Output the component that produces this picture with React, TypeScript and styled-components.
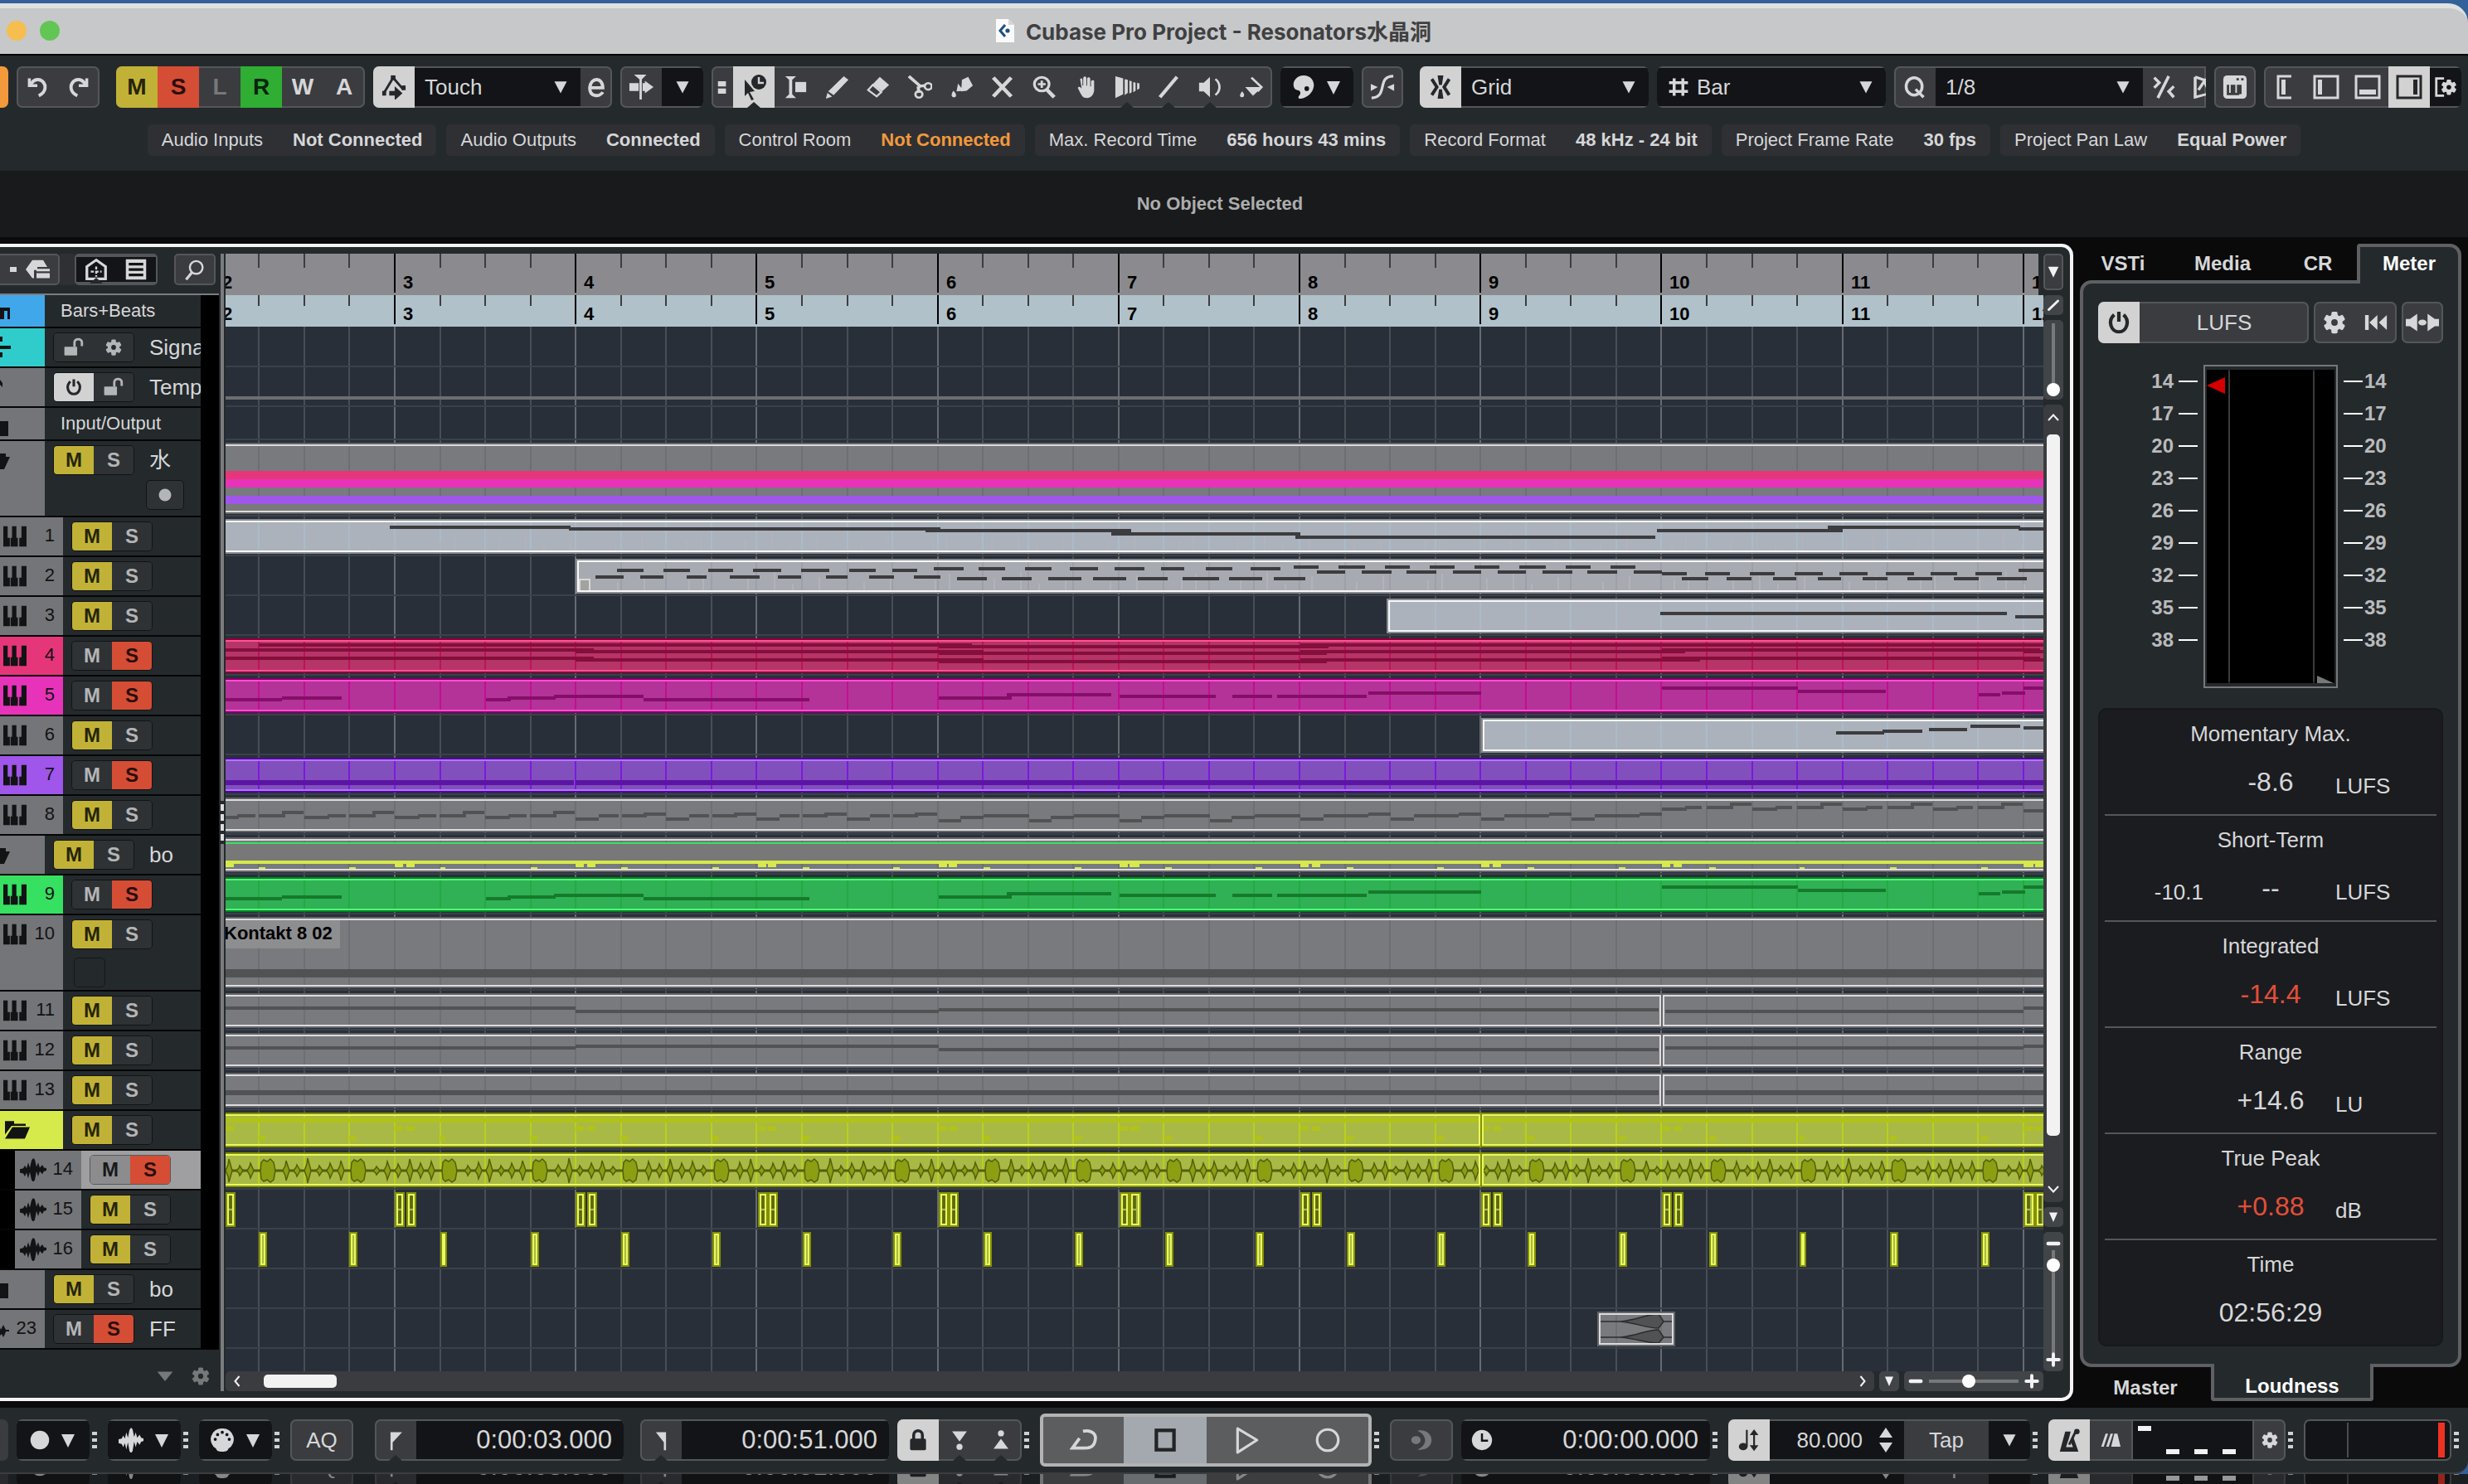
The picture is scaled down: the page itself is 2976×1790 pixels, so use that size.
import React from "react";
import styled, { createGlobalStyle, css } from "styled-components";

/* ------------------------------------------------------------------ */
/* Theme values                                                        */
/* ------------------------------------------------------------------ */

const c = {
  chrome: "#24292c",
  well: "#131417",
  btn: "#3b3c40",
  edge: "#55565a",
  lit: "#d2d2d3",
  ink: "#d6d7d8",
  mute: "#c1b237",
  solo: "#d54d35",
  read: "#30ad33",
  strip: "#747578",
};

const Global = createGlobalStyle`
  * { box-sizing: border-box; }
  body {
    margin: 0;
    background: #0a0a0b;
    color: ${c.ink};
    font-family: "Liberation Sans", Arial, "Noto Sans CJK SC", sans-serif;
    font-size: 26px;
    line-height: 1;
  }
  button, input, select {
    font: inherit;
    color: inherit;
    margin: 0;
    padding: 0;
    border: 0;
    border-radius: 0;
    background: none;
  }
`;

/* ------------------------------------------------------------------ */
/* Icons                                                               */
/* ------------------------------------------------------------------ */

const Svg = styled.svg<{ $w?: number; $h?: number }>`
  display: block;
  flex: none;
  width: ${(p) => p.$w ?? 32}px;
  height: ${(p) => p.$h ?? p.$w ?? 32}px;
  fill: currentColor;
`;

const S = {
  fill: "none",
  stroke: "currentColor",
  strokeWidth: 3,
} as const;

const GearShape = ({ hole }: { hole: string }) => (
  <g>
    {[0, 60, 120].map((a) => (
      <rect key={a} x="12" y="2" width="8" height="28" rx="2" transform={`rotate(${a} 16 16)`} />
    ))}
    <circle cx="16" cy="16" r="10.5" />
    <circle cx="16" cy="16" r="4.2" fill={hole} />
  </g>
);

const icons: Record<string, React.ReactNode> = {
  undo: (
    <g>
      <path d="M3 4h4v8h9v4H3z" />
      <path d="M7 13C10 5 18 4 23 8c6 6 5 15-5 20" {...S} strokeWidth={4.5} />
    </g>
  ),
  redo: (
    <g transform="matrix(-1 0 0 1 32 0)">
      <path d="M3 4h4v8h9v4H3z" />
      <path d="M7 13C10 5 18 4 23 8c6 6 5 15-5 20" {...S} strokeWidth={4.5} />
    </g>
  ),
  automation: (
    <g>
      <path d="M3 24L15 4l13 15" {...S} />
      <rect x="12" y="1" width="6" height="6" />
      <rect x="1" y="21" width="5" height="6" />
      <rect x="26" y="14" width="5" height="6" />
      <path d="M10 21h7v-6l10 9-10 9v-6h-7z" />
    </g>
  ),
  edit: <path d="M8 17h17c0-15-17-15-18 0 0 13 14 13 18 6" {...S} strokeWidth={4.5} />,
  autoscroll: (
    <g>
      <path d="M1 11h12v10H1zM21 8l11 8-11 8zM18 11h4v10h-4z" />
      <path d="M7 0h16l-6 6v26h-3V6z" />
    </g>
  ),
  dots2: <path d="M10 8h11v7H10zM10 18h11v7H10z" />,
  select: (
    <g>
      <path d="M5 7l12 14-6 1 5 9-3 1-4-9-4 4z" />
      <circle cx="22" cy="10" r="9" />
      <path d="M22 4v7h6" fill="none" stroke="#d2d2d3" strokeWidth="2.4" />
    </g>
  ),
  range: (
    <g>
      <path d="M3 1h14l-5 5v20l5 5H3l5-5V6z" />
      <rect x="16" y="9" width="14" height="14" />
    </g>
  ),
  pencil: <path d="M25 1l6 5L12 27l-7-5zM4 24l6 5-8 3z" />,
  eraser: (
    <g>
      <path d="M18 2l12 11-9 9L9 12z" />
      <path d="M9 13l11 10-6 6-11-9z" {...S} strokeWidth={2.5} />
    </g>
  ),
  scissors: (
    <g>
      <path d="M2 1l16 15M14 15l1 9M14 15l9-1" {...S} strokeWidth={4} />
      <circle cx="15" cy="26" r="4.5" {...S} />
      <circle cx="27" cy="15" r="4.5" {...S} />
    </g>
  ),
  glue: <path d="M17 6l8-4 6 12-8 7-7 1zM12 11l7 10-9 1zM6 21c5 5 4 9 1 9s-5-3-1-9z" />,
  mutex: <path d="M4 3l23 26M27 3L4 29" {...S} strokeWidth={5} />,
  zoom: (
    <g>
      <circle cx="13" cy="12" r="9.5" {...S} strokeWidth={3.5} />
      <path d="M19 19l10 11" {...S} strokeWidth={5} />
      <path d="M13 7v10M8 12h10" {...S} />
    </g>
  ),
  hand: (
    <path d="M9 5c1-2 3-1 3 1v8h1V3c1-2 3-2 4 0v11h1V4c1-2 3-2 4 0v11h1V8c1-2 4-2 4 0v13c-1 6-4 10-9 10-6 0-7-3-12-14 1-2 3-2 5 1z" />
  ),
  comp: <path d="M1 1l10 3v22L1 31zM13 5l4 1v18l-4 3zM19 7l3 1v15l-3 2zM24 9l3 1v11l-3 2zM29 10l3 1v7l-3 2z" />,
  line: <path d="M27 2L5 30" {...S} strokeWidth={4.5} />,
  speaker: (
    <g>
      <path d="M2 10h6l8-8v28l-8-8H2z" />
      <path d="M23 5c7 6 7 16 0 22" {...S} />
    </g>
  ),
  paint: (
    <g>
      <path d="M8 16h22L18 28zM4 22c4 4 3 8 0 8s-4-3 0-8z" />
      <path d="M16 3l13 13-5 6" {...S} />
    </g>
  ),
  palette: (
    <path
      fillRule="evenodd"
      d="M16 1c9 0 14 7 13 14-1 8-8 15-17 16-4 0-3-3-1-5 2-3 0-6-3-6C-1 18 2 1 16 1zM17 18a3 3 0 106 0 3 3 0 00-6 0z"
    />
  ),
  curve: (
    <g>
      <path d="M30 2c-22 0-6 27-28 28" {...S} strokeWidth={3.5} />
      <path d="M1 12l9 4-9 5zM31 12l-9 4 9 5z" />
    </g>
  ),
  snap: (
    <g>
      <path d="M4 5l7 11-7 11M28 5l-7 11 7 11" {...S} strokeWidth={4.5} />
      <path d="M12 0h8l-2 13h-4zM12 32h8l-2-13h-4z" />
    </g>
  ),
  hash: <path d="M10 4v24M22 4v24M3 10h26M3 22h26" {...S} strokeWidth={4} />,
  quant: (
    <g>
      <ellipse cx="15" cy="15" rx="11" ry="12" {...S} strokeWidth={4} />
      <path d="M17 19l11 11" {...S} strokeWidth={4} />
    </g>
  ),
  iterq: <path d="M23 1L8 31M3 3l7 7-7 7M30 15l-7 7 7 8" {...S} strokeWidth={4} />,
  qpanel: <path d="M4 2l10 4h16M4 2v28l26-8M8 20l7-12 5 12 8-8" {...S} strokeWidth={3.5} />,
  keyboardBox: (
    <g>
      <rect x="1" y="1" width="30" height="30" rx="5" />
      <path d="M7 13v12h5V13m3 0v12h5V13m3 0v12" fill="none" stroke={c.btn} strokeWidth="3" />
      <path d="M18 6h3M24 6h3" stroke={c.btn} strokeWidth="3" />
    </g>
  ),
  zoneInsp: (
    <g>
      <path d="M24 3H8v26h16" {...S} />
      <rect x="12" y="7" width="5" height="18" />
    </g>
  ),
  zoneLeft: (
    <g>
      <rect x="2" y="3" width="28" height="26" {...S} />
      <rect x="6" y="7" width="5" height="18" />
    </g>
  ),
  zoneLow: (
    <g>
      <rect x="2" y="3" width="28" height="26" {...S} />
      <rect x="6" y="19" width="20" height="6" />
    </g>
  ),
  zoneRight: (
    <g>
      <rect x="2" y="3" width="28" height="26" {...S} />
      <rect x="21" y="7" width="5" height="18" />
    </g>
  ),
  zoneGear: (
    <g>
      <path d="M14 5H4v22h10" {...S} />
      <g transform="translate(9 5) scale(.7)">
        <GearShape hole={c.well} />
      </g>
    </g>
  ),
  gear: <GearShape hole={c.btn} />,
  gearDark: <GearShape hole={c.chrome} />,
  down: <path d="M6 5h20L16 28z" />,
  record: <circle cx="16" cy="16" r="15" />,
  wave: (
    <path d="M0 15l4-1 2-4 2 4 2-8 2 7 2-10 2-3 2 2 2 10 2-6 2 7 3-4 2 4 4 1v3l-4 1-2 4-3-4-2 7-2-7-2 12-2 3-2-3-2-11-2 9-2-8-2 5-2-4-4-1z" />
  ),
  midi: (
    <g>
      <path d="M16 1a14 14 0 018 26c-1 3-3 4-8 4s-7-1-8-4A14 14 0 0116 1z" />
      <g fill={c.well}>
        <circle cx="7" cy="15" r="2" />
        <circle cx="10" cy="9" r="2" />
        <circle cx="16" cy="6" r="2" />
        <circle cx="22" cy="9" r="2" />
        <circle cx="25" cy="15" r="2" />
      </g>
    </g>
  ),
  locL: <path d="M9 5h16L12 19v11H9z" />,
  locR: <path d="M23 5H9l11 14v11h3z" />,
  lock: (
    <g>
      <rect x="5" y="14" width="22" height="16" rx="2" />
      <path d="M10 15V9c0-8 12-8 12 0v6" {...S} strokeWidth={4} />
    </g>
  ),
  punchIn: (
    <g>
      <path d="M5 3h22L16 18z" />
      <circle cx="16" cy="26" r="4.5" />
    </g>
  ),
  punchOut: (
    <g>
      <path d="M5 29h22L16 14z" />
      <circle cx="16" cy="6" r="4.5" />
    </g>
  ),
  cycle: <path d="M15 6c8-2 15 2 14 9-1 8-5 10-12 10H3l8-11" {...S} strokeWidth={3.5} />,
  stop: <rect x="6" y="5" width="20" height="22" {...S} strokeWidth={4} />,
  play: <path d="M5 3v27L27 16z" {...S} strokeLinejoin="round" />,
  rec: <circle cx="16" cy="16" r="12" {...S} />,
  moon: (
    <g>
      <path d="M11 2c24-4 24 32 0 28 13-6 13-21 0-28z" />
      <circle cx="9" cy="16" r="6" />
    </g>
  ),
  clock: (
    <g>
      <circle cx="16" cy="16" r="15" />
      <path d="M16 6v11h9" fill="none" stroke={c.well} strokeWidth="3" />
    </g>
  ),
  note: (
    <g>
      <ellipse cx="8" cy="25" rx="6" ry="5" />
      <path d="M13 2v23M23 6v20" {...S} strokeWidth={2.5} />
      <path d="M17 9l6-8 6 8zM17 23l6 8 6-8z" />
    </g>
  ),
  metronome: (
    <g>
      <path fillRule="evenodd" d="M11 5h7l-2 8-4 12h9l-3-7 3-7 7 20H4z" />
      <path d="M16 22L25 4" {...S} />
      <circle cx="26" cy="5" r="3.5" />
    </g>
  ),
  click: <path d="M1 30L8 2h4L5 30zM9 30L16 2h4l-7 28zM17 30L22 2h5l5 28z" />,
  power: (
    <g>
      <path d="M10 6c-9 8-4 22 6 22S31 14 22 6" {...S} strokeWidth={4.5} />
      <path d="M16 2v13" {...S} strokeWidth={4.5} />
    </g>
  ),
  rewind: <path d="M1 4h5v24H1zM18 4v24L7 16zM31 4v24L20 16z" />,
  monitor: (
    <g>
      <path d="M0 11h4l7-7v24l-7-7H0zM32 11h-4l-7-7v24l7-7h4z" />
      <circle cx="16" cy="16" r="4" />
    </g>
  ),
  unlock: (
    <g>
      <rect x="2" y="15" width="19" height="14" rx="1" />
      <path d="M17 15V8c0-7 11-7 11 0v6" {...S} strokeWidth={3.5} />
    </g>
  ),
  presets: <path d="M9 1h13l5 11H15v5h-4v13H9L1 16zM14 15h16v4H14zM14 22h16v8H14z" />,
  house: (
    <g>
      <path d="M16 3L4 12v17h24V12z" {...S} strokeWidth={3.5} />
      <path d="M16 12v14M9 19h14" {...S} strokeWidth={2.5} strokeDasharray="4 2" />
    </g>
  ),
  list: (
    <path fillRule="evenodd" d="M2 1h28v30H2zM6 6v4h20V6zM6 14v4h20v-4zM6 22v4h20v-4z" />
  ),
  search: (
    <g>
      <circle cx="18" cy="13" r="9.5" {...S} />
      <path d="M12 20L3 31" {...S} strokeWidth={4} />
    </g>
  ),
  piano: <path d="M0 2h6v16h3v12H0zM12 2h6v16h2v12H10V18h2zM25 2h7v28H22V18h3z" />,
  folder: <path d="M1 4h12v4h14v3H10L2 24V4zM11 13h21l-6 17H2z" />,
  pencilSmall: <path d="M5 27L27 6" {...S} strokeWidth={6} strokeLinecap="round" />,
  minus: <path d="M5 16h22" {...S} strokeWidth={8} strokeLinecap="round" />,
  plus: <path d="M4 16h24M16 4v24" {...S} strokeWidth={7} strokeLinecap="round" />,
  chevL: <path d="M21 4L11 16l10 12" {...S} strokeWidth={4} />,
  chevR: <path d="M11 4l10 12-10 12" {...S} strokeWidth={4} />,
  chevU: <path d="M4 22L16 9l12 13" {...S} strokeWidth={4} />,
  chevD: <path d="M4 10l12 13 12-13" {...S} strokeWidth={4} />,
};

const Icon = ({ name, size = 28, h }: { name: string; size?: number; h?: number }) => (
  <Svg viewBox="0 0 32 32" $w={size} $h={h} preserveAspectRatio="none" aria-hidden="true">
    {icons[name]}
  </Svg>
);

/* ------------------------------------------------------------------ */
/* Window frame and toolbar                                            */
/* ------------------------------------------------------------------ */

const Page = styled.div`
  display: flex;
  flex-direction: column;
  min-height: 100vh;
  overflow: hidden;
  background: #33619a;
  padding-top: 4px;
`;

const TitleBar = styled.header`
  display: flex;
  align-items: center;
  gap: 16px;
  height: 63px;
  padding: 0 8px 2px;
  background: #c7c8ca;
  border-top: 6px solid #e0e1e1;
  border-bottom: 2px solid #050505;
  border-radius: 0 24px 0 0;
`;

const Light = styled.button<{ $bg: string }>`
  width: 24px;
  height: 24px;
  border-radius: 50%;
  background: ${(p) => p.$bg};
`;

const Title = styled.h1`
  flex: 1;
  display: flex;
  justify-content: center;
  align-items: center;
  gap: 13px;
  margin: 0;
  padding-right: 130px;
  font: 700 26px Inter, "Noto Sans CJK SC", sans-serif;
  color: #3f4041;
`;

const ToolBar = styled.div`
  display: flex;
  align-items: center;
  gap: 10px;
  height: 76px;
  padding: 0 8px 0 0;
  background: ${c.chrome};
`;

const Group = styled.div<{ $w?: number; $ml?: number; $cut?: boolean }>`
  display: flex;
  flex: none;
  width: ${(p) => (p.$w ? `${p.$w}px` : "auto")};
  height: 50px;
  margin-left: ${(p) => p.$ml ?? 0}px;
  overflow: hidden;
  border-radius: 7px;
  background: ${c.btn};
  box-shadow: inset 0 0 0 2px ${c.edge};
  ${(p) => p.$cut && css`border-radius: 7px 0 0 7px;`}
`;

const tones = {
  plain: css`color: ${c.ink};`,
  lit: css`background: ${c.lit}; color: #262729;`,
  well: css`background: ${c.well}; color: ${c.ink}; box-shadow: inset 0 2px ${c.edge}, inset 0 -2px ${c.edge};`,
  mute: css`background: ${c.mute}; color: #262408;`,
  solo: css`background: ${c.solo}; color: #2a0e09;`,
  read: css`background: ${c.read}; color: #07250b;`,
  dim: css`color: #77787a;`,
};
type Tone = keyof typeof tones;

const Btn = styled.button<{ $w?: number; $tone?: Tone; $notch?: boolean }>`
  position: relative;
  display: flex;
  flex: none;
  align-items: center;
  justify-content: center;
  width: ${(p) => p.$w ?? 50}px;
  height: 100%;
  overflow: hidden;
  font-size: 28px;
  font-weight: bold;
  ${(p) => tones[p.$tone ?? "plain"]}
  ${(p) =>
    p.$notch &&
    css`
      &::after {
        content: "";
        position: absolute;
        bottom: 0;
        left: calc(50% - 8px);
        border: 8px solid transparent;
        border-top: 0;
        border-bottom: 7px solid ${c.chrome};
      }
    `}
`;

const SelectBox = styled.label<{ $w: number; $pad?: number }>`
  display: flex;
  flex: none;
  align-items: center;
  gap: 8px;
  width: ${(p) => p.$w}px;
  padding: 0 12px;
  background: ${c.well};
  box-shadow: inset 0 2px ${c.edge}, inset 0 -2px ${c.edge};
  select {
    flex: 1;
    min-width: 0;
    appearance: none;
    outline: none;
  }
`;

const Pick = ({ w, value, label, icon }: { w: number; value: string; label: string; icon?: string }) => (
  <SelectBox $w={w}>
    {icon && <Icon name={icon} size={28} />}
    <select aria-label={label} defaultValue={value}>
      <option>{value}</option>
    </select>
    <Icon name="down" size={24} h={20} />
  </SelectBox>
);

const Partial = styled.button<{ $bg: string }>`
  flex: none;
  width: 10px;
  height: 50px;
  border-radius: 0 7px 7px 0;
  background: ${(p) => p.$bg};
`;

const tools: [string, string, boolean][] = [
  ["range", "Range selection", false],
  ["pencil", "Draw", false],
  ["eraser", "Erase", false],
  ["scissors", "Split", false],
  ["glue", "Glue", false],
  ["mutex", "Mute", false],
  ["zoom", "Zoom", false],
  ["hand", "Hand", false],
  ["comp", "Comp", true],
  ["line", "Line", true],
  ["speaker", "Play", true],
  ["paint", "Colour", false],
];

const MainToolbar = () => (
  <ToolBar role="toolbar" aria-label="Project tools">
    <Partial $bg="#f2993c" aria-label="Activate project" />
    <Group $w={100}>
      <Btn aria-label="Undo"><Icon name="undo" size={28} /></Btn>
      <Btn aria-label="Redo"><Icon name="redo" size={28} /></Btn>
    </Group>
    <Group $w={300} $ml={10}>
      <Btn $tone="mute">M</Btn>
      <Btn $tone="solo">S</Btn>
      <Btn $tone="dim">L</Btn>
      <Btn $tone="read">R</Btn>
      <Btn>W</Btn>
      <Btn>A</Btn>
    </Group>
    <Group $w={288}>
      <Btn $tone="lit" aria-label="Automation panel"><Icon name="automation" size={30} /></Btn>
      <Pick w={200} value="Touch" label="Automation mode" />
      <Btn $w={38} aria-label="Edit"><Icon name="edit" size={28} /></Btn>
    </Group>
    <Group $w={100}>
      <Btn aria-label="Auto-scroll"><Icon name="autoscroll" size={30} /></Btn>
      <Btn $tone="well" aria-label="Auto-scroll settings"><Icon name="down" size={24} h={20} /></Btn>
    </Group>
    <Group $w={676}>
      <Btn $w={26} aria-label="Tool options"><Icon name="dots2" size={28} /></Btn>
      <Btn $tone="lit" $notch aria-label="Object selection"><Icon name="select" size={32} /></Btn>
      {tools.map(([icon, label, notch]) => (
        <Btn key={icon} $notch={notch} aria-label={label}><Icon name={icon} size={30} h={28} /></Btn>
      ))}
    </Group>
    <Group $w={88}>
      <Btn $w={88} $tone="well" aria-label="Colour menu">
        <Icon name="palette" size={30} />
        <Svg viewBox="0 0 32 20" $w={32} $h={20} aria-hidden="true"><path d="M13 3h16l-8 16z" /></Svg>
      </Btn>
    </Group>
    <Group $w={50}>
      <Btn aria-label="Zero crossings"><Icon name="curve" size={30} /></Btn>
    </Group>
    <Group $w={276} $ml={10}>
      <Btn $tone="lit" aria-label="Snap"><Icon name="snap" size={28} /></Btn>
      <Pick w={226} value="Grid" label="Snap type" />
    </Group>
    <Group $w={276}>
      <Pick w={276} value="Bar" label="Grid type" icon="hash" />
    </Group>
    <Group $w={376} $cut>
      <Btn aria-label="Quantize"><Icon name="quant" size={28} /></Btn>
      <Pick w={250} value="1/8" label="Quantize preset" />
      <Btn aria-label="Iterative quantize"><Icon name="iterq" size={28} /></Btn>
      <Btn aria-label="Quantize panel"><Icon name="qpanel" size={32} h={28} /></Btn>
    </Group>
    <Group $w={50}>
      <Btn aria-label="Input keyboard"><Icon name="keyboardBox" size={30} /></Btn>
    </Group>
    <Group $w={238}>
      <Btn aria-label="Inspector"><Icon name="zoneInsp" size={32} /></Btn>
      <Btn aria-label="Left zone"><Icon name="zoneLeft" size={32} /></Btn>
      <Btn aria-label="Lower zone"><Icon name="zoneLow" size={32} /></Btn>
      <Btn $tone="lit" aria-label="Right zone"><Icon name="zoneRight" size={32} /></Btn>
      <Btn $w={38} $tone="well" aria-label="Layout setup"><Icon name="zoneGear" size={30} /></Btn>
    </Group>
  </ToolBar>
);

const StatusBar = styled.dl`
  display: flex;
  justify-content: center;
  gap: 12px;
  margin: 0;
  padding: 7px 24px 18px 0;
  background: ${c.chrome};
  font-size: 22px;
`;

const Pill = styled.div<{ $warn?: boolean }>`
  display: flex;
  align-items: center;
  gap: 36px;
  height: 38px;
  padding: 0 17px;
  border-radius: 5px;
  background: #2f3034;
  white-space: nowrap;
  dd {
    margin: 0;
    font-weight: bold;
    color: ${(p) => (p.$warn ? "#f2993c" : "inherit")};
  }
`;

const status: [string, string, boolean?][] = [
  ["Audio Inputs", "Not Connected"],
  ["Audio Outputs", "Connected"],
  ["Control Room", "Not Connected", true],
  ["Max. Record Time", "656 hours 43 mins"],
  ["Record Format", "48 kHz - 24 bit"],
  ["Project Frame Rate", "30 fps"],
  ["Project Pan Law", "Equal Power"],
];

const InfoLine = styled.div`
  display: flex;
  align-items: center;
  justify-content: center;
  height: 80px;
  padding-right: 34px;
  background: #191a1b;
  font-size: 22px;
  font-weight: bold;
  color: #adadae;
`;

/* ------------------------------------------------------------------ */
/* Track list                                                          */
/* ------------------------------------------------------------------ */

const Main = styled.main`
  display: flex;
  padding: 8px 8px 8px 0;
  background: #0a0a0b;
`;

const Frame = styled.section`
  display: flex;
  flex: 1;
  min-width: 0;
  padding: 8px 8px 8px 0;
  border: 4px solid #f4f4f6;
  border-left: 0;
  border-radius: 0 14px 14px 0;
  background: ${c.chrome};
`;

const ListColumn = styled.div`
  display: flex;
  flex-direction: column;
  flex: none;
  width: 264px;
`;

const ListHead = styled.div`
  display: flex;
  height: 50px;
  border-bottom: 2px solid #7b7c80;
`;

const HeadGroup = styled.div<{ $w: number; $open?: boolean; $ml?: number }>`
  display: flex;
  align-items: center;
  justify-content: flex-end;
  width: ${(p) => p.$w}px;
  height: 38px;
  margin-left: ${(p) => p.$ml ?? 0}px;
  border: 2px solid ${c.edge};
  border-left-width: ${(p) => (p.$open ? 0 : 2)}px;
  border-radius: ${(p) => (p.$open ? "0 5px 5px 0" : "5px")};
  background: ${c.btn};
`;

const HeadFill = styled.div`
  width: 18px;
  height: 38px;
  background: #2f3034;
`;

const Rows = styled.ol`
  margin: 0;
  padding: 0;
  list-style: none;
  background: #000;
`;

const Row = styled.li<{ $h: number; $sel?: boolean; $nest?: boolean }>`
  display: flex;
  width: 242px;
  height: ${(p) => p.$h}px;
  padding-left: ${(p) => (p.$nest ? 18 : 0)}px;
  border-bottom: 2px solid #050505;
  overflow: hidden;
`;

const Strip = styled.div<{ $bg: string; $w: number; $nest?: boolean }>`
  display: flex;
  flex: none;
  align-items: flex-start;
  justify-content: space-between;
  width: ${(p) => p.$w}px;
  padding: 9px 10px 0 ${(p) => (p.$nest ? 6 : p.$w === 54 ? 0 : 4)}px;
  background: ${(p) => p.$bg};
  color: #121314;
  font-size: 22px;
  line-height: 26px;
`;

const Body = styled.div<{ $sel?: boolean }>`
  flex: 1;
  min-width: 0;
  padding: 5px 0 0 10px;
  background: ${(p) => (p.$sel ? "#9f9fa1" : c.chrome)};
`;

const Line = styled.div`
  display: flex;
  align-items: center;
  height: 36px;
  gap: 18px;
  white-space: nowrap;
`;

const Label = styled.div`
  padding-left: 9px;
  font-size: 22px;
  line-height: 28px;
  white-space: nowrap;
`;

const Pair = styled.div<{ $sel?: boolean }>`
  display: flex;
  flex: none;
  height: 36px;
  border: 1px solid ${(p) => (p.$sel ? "#58595a" : "#121314")};
  border-radius: 5px;
  overflow: hidden;
`;

const Cell = styled.button<{ $on?: "mute" | "solo" | "lit"; $sel?: boolean }>`
  display: flex;
  align-items: center;
  justify-content: center;
  width: 48px;
  height: 34px;
  font-size: 24px;
  font-weight: bold;
  background: ${(p) =>
    p.$on ? { mute: c.mute, solo: c.solo, lit: c.lit }[p.$on] : p.$sel ? "#8c8c8e" : "#2e3235"};
  color: ${(p) =>
    p.$on ? { mute: "#262408", solo: "#2a0e09", lit: "#262729" }[p.$on] : p.$sel ? "#18191a" : "#b4b5b6"};
`;

const ArmBox = styled.button<{ $empty?: boolean }>`
  display: flex;
  align-items: center;
  justify-content: center;
  width: ${(p) => (p.$empty ? 38 : 46)}px;
  height: 36px;
  margin: ${(p) => (p.$empty ? "10px 0 0 3px" : "6px 0 0 112px")};
  border: 1px solid ${(p) => (p.$empty ? "#15171a" : "#121314")};
  border-radius: 5px;
  background: ${(p) => (p.$empty ? "transparent" : "#2e3235")};
  color: #b4b5b6;
`;

type Kind = "piano" | "wave" | "folder" | "cut";
interface Track {
  n?: string;
  name?: string;
  bg?: string;
  kind: Kind;
  on: "mute" | "solo";
  level: 0 | 1 | 2;
  h?: number;
  sel?: boolean;
  extra?: "arm" | "slot";
}

const tracks: Track[] = [
  { name: "水", kind: "cut", on: "mute", level: 0, h: 92, extra: "arm" },
  { n: "1", kind: "piano", on: "mute", level: 1 },
  { n: "2", kind: "piano", on: "mute", level: 1 },
  { n: "3", kind: "piano", on: "mute", level: 1 },
  { n: "4", kind: "piano", on: "solo", level: 1, bg: "#e6367a" },
  { n: "5", kind: "piano", on: "solo", level: 1, bg: "#e733b9" },
  { n: "6", kind: "piano", on: "mute", level: 1 },
  { n: "7", kind: "piano", on: "solo", level: 1, bg: "#a055eb" },
  { n: "8", kind: "piano", on: "mute", level: 1 },
  { name: "bo", kind: "cut", on: "mute", level: 0 },
  { n: "9", kind: "piano", on: "solo", level: 1, bg: "#36e061" },
  { n: "10", kind: "piano", on: "mute", level: 1, h: 92, extra: "slot" },
  { n: "11", kind: "piano", on: "mute", level: 1 },
  { n: "12", kind: "piano", on: "mute", level: 1 },
  { n: "13", kind: "piano", on: "mute", level: 1 },
  { kind: "folder", on: "mute", level: 1, bg: "#d6ea4b" },
  { n: "14", kind: "wave", on: "solo", level: 2, sel: true },
  { n: "15", kind: "wave", on: "mute", level: 2 },
  { n: "16", kind: "wave", on: "mute", level: 2 },
  { name: "bo", kind: "cut", on: "mute", level: 0 },
  { n: "23", name: "FF", kind: "cut", on: "solo", level: 0 },
];

const CutFolder = () => (
  <Svg viewBox="0 0 12 28" $w={12} $h={28} aria-hidden="true">
    <path d="M0 6h7v4h5L5 25H0z" />
  </Svg>
);
const CutBlock = () => (
  <Svg viewBox="0 0 10 28" $w={10} $h={28} aria-hidden="true">
    <path d="M0 7h10v18H0z" />
  </Svg>
);
const CutWave = () => (
  <Svg viewBox="0 0 11 28" $w={11} $h={28} aria-hidden="true">
    <path d="M0 12l1 3 3-6 2 4 1 2h4v2H7l-1 3-2 4-2-4-2 2z" />
  </Svg>
);

const widths = [54, 76, 80];

const TrackRow = ({ t, index }: { t: Track; index: number }) => (
  <Row $h={t.h ?? 48} $nest={t.level === 2}>
    <Strip $bg={t.bg ?? c.strip} $w={widths[t.level]} $nest={t.level === 2}>
      {t.kind === "piano" && <Icon name="piano" size={28} />}
      {t.kind === "wave" && <Icon name="wave" size={32} h={28} />}
      {t.kind === "folder" && <Icon name="folder" size={32} h={26} />}
      {t.kind === "cut" && (t.n ? <CutWave /> : index === 19 ? <CutBlock /> : <CutFolder />)}
      <span>{t.n}</span>
    </Strip>
    <Body $sel={t.sel}>
      <Line>
        <Pair $sel={t.sel}>
          <Cell $on={t.on === "mute" ? "mute" : undefined} $sel={t.sel}>M</Cell>
          <Cell $on={t.on === "solo" ? "solo" : undefined} $sel={t.sel}>S</Cell>
        </Pair>
        {t.name && <span>{t.name}</span>}
      </Line>
      {t.extra === "arm" && (
        <ArmBox aria-label="Record enable"><Icon name="record" size={16} /></ArmBox>
      )}
      {t.extra === "slot" && <ArmBox $empty aria-label="Empty control slot" />}
    </Body>
  </Row>
);

const ListFoot = styled.div`
  display: flex;
  flex: 1;
  align-items: center;
  justify-content: flex-end;
  gap: 16px;
  height: 50px;
  padding: 14px 10px 0 0;
  color: #77787a;
`;

const TrackList = () => (
  <ListColumn>
    <ListHead>
      <HeadGroup $w={72} $open>
        <Svg viewBox="0 0 10 30" $w={10} $h={30} aria-hidden="true"><path d="M0 12h8v6H0z" /></Svg>
        <Btn $w={48} aria-label="Track presets"><Icon name="presets" size={32} h={24} /></Btn>
      </HeadGroup>
      <HeadFill />
      <HeadGroup $w={100}>
        <Btn $w={48} $tone="well" $notch aria-label="Track visibility"><Icon name="house" size={30} h={28} /></Btn>
        <Btn $w={48} $tone="well" aria-label="Track filter"><Icon name="list" size={28} h={26} /></Btn>
      </HeadGroup>
      <HeadGroup $w={50} $ml={20}>
        <Btn $w={46} aria-label="Find tracks"><Icon name="search" size={26} /></Btn>
      </HeadGroup>
    </ListHead>
    <Rows>
      <Row $h={40}>
        <Strip $bg="#40a8ea" $w={54}>
          <Svg viewBox="0 0 12 24" $w={12} $h={24} aria-hidden="true"><path d="M0 6h12v14H9V10H5v10H0z" /></Svg>
        </Strip>
        <Body><Label>Bars+Beats</Label></Body>
      </Row>
      <Row $h={48}>
        <Strip $bg="#30cccb" $w={54}>
          <Svg viewBox="0 0 13 28" $w={13} $h={28} aria-hidden="true"><path d="M0 12h13v4H0zM0 1h3v6H0zM0 20h3v6H0z" /></Svg>
        </Strip>
        <Body>
          <Line>
            <Pair>
              <Cell aria-label="Lock"><Icon name="unlock" size={26} h={24} /></Cell>
              <Cell aria-label="Settings"><Icon name="gearDark" size={22} /></Cell>
            </Pair>
            <span>Signature</span>
          </Line>
        </Body>
      </Row>
      <Row $h={48}>
        <Strip $bg={c.strip} $w={54}>
          <Svg viewBox="0 0 4 28" $w={4} $h={28} aria-hidden="true"><path d="M0 5l3 4v5l-3-3z" /></Svg>
        </Strip>
        <Body>
          <Line>
            <Pair>
              <Cell $on="lit" aria-label="Activate tempo"><Icon name="power" size={22} /></Cell>
              <Cell aria-label="Lock"><Icon name="unlock" size={26} h={24} /></Cell>
            </Pair>
            <span>Tempo</span>
          </Line>
        </Body>
      </Row>
      <Row $h={40}>
        <Strip $bg={c.strip} $w={54}><CutBlock /></Strip>
        <Body><Label>Input/Output</Label></Body>
      </Row>
      {tracks.map((t, i) => (
        <TrackRow key={i} t={t} index={i} />
      ))}
    </Rows>
    <ListFoot>
      <Icon name="down" size={30} h={16} />
      <Icon name="gearDark" size={24} />
    </ListFoot>
  </ListColumn>
);

const Divider = styled.div`
  display: flex;
  flex-direction: column;
  justify-content: center;
  flex: none;
  width: 4px;
  margin: 0 2px;
  background: #7b7c80;
`;

const Grip = styled.div`
  height: 52px;
  background: repeating-linear-gradient(${c.chrome} 0 4px, #dcdcde 4px 12px);
`;

/* ------------------------------------------------------------------ */
/* Arrangement                                                         */
/* ------------------------------------------------------------------ */

const BAR = 218.2;
const END = 2220;
const barX = (n: number) => Math.round(204 + BAR * (n - 3));
const bars = [2, 3, 4, 5, 6, 7, 8, 9, 10, 11, 12];
const beats = bars.flatMap((n) => [0, 1, 2, 3].map((b) => ({ x: Math.round(204 + BAR * (n - 3 + b / 4)), bar: b === 0 })));

const Timeline = styled.div`
  display: flex;
  flex-direction: column;
  flex: 1;
  min-width: 0;
`;

const RulerRow = styled.div<{ $h: number; $bg: string; $short?: boolean }>`
  position: relative;
  height: ${(p) => p.$h}px;
  margin-right: ${(p) => (p.$short ? 6 : 0)}px;
  overflow: hidden;
  background: ${(p) => p.$bg};
  font-size: 22px;
  font-weight: bold;
  color: #000;
  svg { fill: none; }
`;

const BarNo = styled.span`
  position: absolute;
  bottom: 4px;
`;

const Ruler = ({ h, bg, tick, short }: { h: number; bg: string; tick: number; short?: boolean }) => (
  <RulerRow $h={h} $bg={bg} $short={short}>
    <Svg viewBox={`0 0 ${END} ${h}`} $w={END} $h={h} aria-hidden="true">
      {beats.map((b) => (
        <path key={b.x} d={`M${b.x} 0v${b.bar ? h - 3 : tick}`} stroke={b.bar ? "#000" : "#3c3d40"} strokeWidth="2" />
      ))}
    </Svg>
    {bars.map((n) => (
      <BarNo key={n} style={{ left: barX(n) + 10 }}>{n}</BarNo>
    ))}
  </RulerRow>
);

const Arrange = styled.div`
  position: relative;
  display: flex;
  flex-direction: column;
  flex: 1;
  overflow: hidden;
  background: #282f39;
`;

const Grid = styled.svg`
  position: absolute;
  top: 0;
  left: 0;
  width: ${END}px;
  height: 100%;
`;

const Lane = styled.div<{ $h: number }>`
  position: relative;
  flex: none;
  height: ${(p) => p.$h}px;
  border-bottom: 2px solid #3a414a;
`;

const TempoCurve = styled.div`
  margin-top: 35px;
  height: 4px;
  background: #6d6e71;
`;

const skins = {
  white: { out: "#8a8c90", rim: "#f8f8fb", bg: "#abb2bb", grid: "#a9bbcb", note: "#3c3c3f" },
  pale: { out: "#8a8c90", rim: "#f8f8fb", bg: "#a7aab1", grid: "#9da0a6", note: "#3c3c3f" },
  grey: { out: "#656568", rim: "#dcdcde", bg: "#787a7e", grid: "#6d6f72", note: "#515253" },
  red: { out: "#8e0038", rim: "#ff5393", bg: "#b63569", grid: "#c0115b", note: "#850e3b" },
  pink: { out: "#85006a", rim: "#ff4fd0", bg: "#b43398", grid: "#c20f93", note: "#850e69" },
  violet: { out: "#4d0a93", rim: "#b373ff", bg: "#8250bc", grid: "#7c19de", note: "#5b15a3" },
  green: { out: "#00841f", rim: "#52f478", bg: "#30b155", grid: "#22ab42", note: "#157a2c" },
  lime: { out: "#849100", rim: "#e8f863", bg: "#a9b945", grid: "#b9d01c", note: "#b1c21b" },
};
type Skin = keyof typeof skins;

const ClipBox = styled.div<{ $skin: Skin; $tall?: boolean }>`
  position: absolute;
  top: 3px;
  height: ${(p) => (p.$tall ? 86 : 42)}px;
  border: 2px solid ${(p) => skins[p.$skin].out};
  background: ${(p) => skins[p.$skin].bg};
  > div {
    height: 100%;
    overflow: hidden;
    border: 2px solid ${(p) => skins[p.$skin].rim};
  }
`;

type Seg = [number, number, number, number?, string?];

interface ClipProps {
  skin: Skin;
  from?: number;
  to?: number;
  tall?: boolean;
  plain?: boolean;
  segs?: Seg[];
  children?: React.ReactNode;
  title?: React.ReactNode;
}

/* Notes use timeline x and y from the clip's top edge: [x1, x2, y, height, colour]. */
const Clip = ({ skin, from = -20, to = END, tall, plain, segs = [], children, title }: ClipProps) => {
  const h = (tall ? 86 : 42) - 8;
  const w = to - from - 8;
  return (
    <ClipBox $skin={skin} $tall={tall} style={{ left: from, width: to - from }}>
      <div>
        {title}
        <Svg viewBox={`${from + 4} 4 ${w} ${h}`} $w={w} $h={h} aria-hidden="true">
          {!plain && beats.map((b) => (
            <rect key={b.x} x={b.x - 1} y="4" width="2" height={h} fill={skins[skin].grid} />
          ))}
          {segs.map(([a, b, y, sh = 4, fill], i) => (
            <rect key={i} x={a} y={y} width={b - a} height={sh} fill={fill ?? skins[skin].note} />
          ))}
          {children}
        </Svg>
      </div>
    </ClipBox>
  );
};

const ClipTitle = styled.span`
  position: absolute;
  top: 2px;
  left: 2px;
  width: 154px;
  height: 34px;
  padding-left: 14px;
  background: #8d8e90;
  font-size: 22px;
  font-weight: bold;
  line-height: 32px;
  color: #000;
  white-space: nowrap;
`;

const at = (y: number, xs: number[]): Seg[] => {
  const out: Seg[] = [];
  for (let i = 0; i < xs.length; i += 2) out.push([xs[i], xs[i + 1], y]);
  return out;
};

const velocity = (from: number): Seg[] => {
  const out: Seg[] = [];
  for (let i = 0; from + i * 27 < END; i++) {
    const k = (i * 37) % 11;
    if (k > 2) out.push([from + i * 27 + (k % 3) * 5, from + i * 27 + (k % 3) * 5 + 2, 36 - k * 2, 2 + k * 2, "#b3b2bb"]);
  }
  return out;
};

const notes1: Seg[] = [
  [198, 416, 8], [414, 862, 10], [844, 1092, 12], [1068, 1296, 16], [1290, 1724, 20],
  [1726, 1950, 12], [1932, 2164, 8], [2162, END, 10],
];

const notes2: Seg[] = [
  ...at(12, [472, 504, 528, 560, 582, 612, 636, 670, 694, 728, 752, 784, 804, 834, 2162, END]),
  ...at(10, [854, 890, 908, 940, 964, 996, 1018, 1052, 1072, 1108, 1128, 1156, 1182, 1214, 1236, 1272]),
  ...at(8, [1288, 1318, 1342, 1374, 1398, 1428, 1452, 1482, 1506, 1536, 1560, 1592, 1616, 1646, 1670, 1700]),
  ...at(20, [446, 480, 500, 528, 556, 580, 608, 644, 666, 694, 724, 750, 776, 806, 830, 862]),
  ...at(22, [882, 918, 936, 972, 992, 1032, 1046, 1086, 1100, 1136, 1154, 1198, 1210, 1250, 1264, 1302]),
  ...at(14, [1316, 1350, 1370, 1406, 1424, 1460, 1480, 1514, 1534, 1568, 1588, 1624, 1642, 1678, 1698, 1732]),
  ...at(16, [1732, 1762, 1784, 1814, 1838, 1868, 1892, 1926, 1946, 1980, 2002, 2036, 2056, 2088, 2110, 2142]),
  ...at(22, [1756, 1788, 1810, 1840, 1866, 1894, 1920, 1948, 1974, 2004, 2028, 2058, 2084, 2114, 2136, 2172]),
];

const notes4: Seg[] = [
  [40, 900, 6], [-20, 444, 12], [-20, 444, 22], [422, 914, 14], [422, 914, 24],
  [860, 1330, 8], [860, 1328, 16], [860, 1328, 26], [1296, END, 6], [1296, 1760, 14],
  [1296, 1778, 24], [1732, 2188, 12], [1732, 2188, 22], [2168, END, 14], [2168, END, 24],
];

const melody: Seg[] = [
  [-20, 68, 24], [68, 140, 22], [314, 344, 24], [340, 398, 22], [396, 504, 20], [504, 704, 24],
  [860, 948, 22], [942, 1068, 18], [1078, 1194, 20], [1214, 1262, 20], [1268, 1376, 20],
  [1378, 1514, 16], [1732, 1896, 10], [1896, 2002, 14], [2114, 2140, 18], [2142, 2170, 16], [2168, END, 10],
];

const notes8: Seg[] = [];
for (let i = 0; i < 4; i++) {
  const a = -14 + i * 109;
  notes8.push([a, a + 30, 22], [a + 28, a + 50, 20], [a + 54, a + 86, 20], [a + 82, a + 108, 16]);
  const b = 422 + i * 109;
  notes8.push([b, b + 28, 24], [b + 28, b + 52, 20], [b + 56, b + 86, 20], [b + 82, b + 109, 18]);
  const d = 860 + i * 109;
  notes8.push([d, d + 27, 26], [d + 26, d + 54, 22], [d + 54, d + 109, 20]);
  const e = 1296 + i * 109;
  notes8.push([e, e + 28, 24], [e + 28, e + 82, 20], [e + 82, e + 109, 18]);
  const f = 1732 + i * 109;
  notes8.push([f, f + 30, 12], [f + 28, f + 48, 10], [f + 54, f + 86, 10], [f + 82, f + 108, 6]);
}
notes8.push([2168, END, 14]);

const kicks: [number, number][] = [
  [0, 12], [204, 12], [218, 12], [422, 12], [436, 12], [642, 12], [654, 12], [860, 12], [872, 12],
  [1078, 12], [1090, 14], [1296, 12], [1310, 12], [1514, 12], [1528, 12], [1732, 12], [1746, 12],
  [2168, 14], [2182, 14],
];
const snares: [number, number][] = Array.from({ length: 20 }, (_, k) => [
  Math.round(40 + 109.3 * k),
  k === 2 || k === 17 ? 8 : 10,
]);

const folderSegs: Seg[] = [
  [-20, END, 6, 2, "#36e061"],
  [-20, END, 8, 20, "#787879"],
  [-20, END, 28, 4, "#d6ea4b"],
  ...kicks.map(([x, w]): Seg => [x, x + w - 2, 32, 4, "#d6ea4b"]),
  ...snares.map(([x, w]): Seg => [x, x + w - 2, 36, 2, "#d6ea4b"]),
];

const limeSegs = (from: number, to: number): Seg[] => [
  [from, to, 6, 6],
  ...kicks.map(([x, w]): Seg => [x, x + w - 2, 16, 6]),
  ...snares.map(([x, w]): Seg => [x, x + w - 2, 28, 6]),
];

const heights = [11, 6, 10, 14, 6, 9, 12, 7, 15, 6, 9, 12, 5, 11, 8, 14, 9];
const wavePath = (() => {
  let d = "";
  let n = 0;
  for (let k = -1; k < 20; k++) {
    const x = Math.round(42 + 109.3 * k);
    d += `M${x} 22l1-10 3-3 4 2 4-3 4 4 2 10-2 11-4 3-4-3-4 2-3-3z`;
    for (const o of [31, 44, 57, 71, 84, 97]) {
      const h = heights[n++ % heights.length];
      const cx = x + o;
      d += `M${cx - 4} 22l3 -${Math.ceil(h / 2)}l1 -${h - Math.ceil(h / 2)}l4 ${h}l-4 ${h}l-1 -${Math.floor(h / 2)}z`;
    }
  }
  return d;
})();

const Wave = () => (
  <g stroke="#55600b" strokeWidth="1.5" fill="#8c9e12">
    <path d={`M-20 22H${END}`} strokeWidth="3" />
    <path d={wavePath} />
  </g>
);

const Swell = () => (
  <g fill="#515253" stroke="#2b2c2d" strokeWidth="1.5">
    <path d="M1658 12h24c22-2 30-9 46-9l6 9h10-10l-6 8c-16 0-24-6-46-8zM1658 31h24c22-2 30-9 46-9l6 9h10-10l-6 7c-16 0-24-5-46-7z" />
  </g>
);

const Arrangement = () => (
  <Arrange>
    <Grid aria-hidden="true">
      {beats.map((b) => (
        <rect key={b.x} x={b.x - 1} y="0" width="2" height="100%" fill={b.bar ? "#666b70" : "#484e54"} />
      ))}
    </Grid>
    <Lane $h={49} />
    <Lane $h={48}><TempoCurve /></Lane>
    <Lane $h={40} />
    <Lane $h={92}>
      <Clip
        skin="grey"
        tall
        segs={[[-20, END, 34, 10, "#e6367a"], [-20, END, 44, 10, "#e733b9"], [-20, END, 64, 10, "#a055eb"], [-20, END, 74, 10, "#7a7a7b"]]}
      />
    </Lane>
    <Lane $h={48}><Clip skin="white" segs={[...velocity(140), ...notes1]} /></Lane>
    <Lane $h={48}>
      <Clip skin="pale" from={422} segs={[...velocity(440), ...notes2]}>
        <rect x="427" y="25" width="12" height="14" fill="#a2a2a1" stroke="#d8d8d8" strokeWidth="2" />
      </Clip>
    </Lane>
    <Lane $h={48}><Clip skin="white" from={1400} segs={[[1730, 2148, 16], [2158, END, 20]]} /></Lane>
    <Lane $h={48}><Clip skin="red" segs={notes4} /></Lane>
    <Lane $h={48}><Clip skin="pink" segs={melody} /></Lane>
    <Lane $h={48}>
      <Clip
        skin="white"
        from={1514}
        segs={[[1942, 2000, 16], [1998, 2046, 14], [2054, 2100, 12], [2104, 2164, 8], [2168, END, 10]]}
      />
    </Lane>
    <Lane $h={48}><Clip skin="violet" segs={[[-20, 420, 27, 6], [422, END, 27, 6]]} /></Lane>
    <Lane $h={48}><Clip skin="grey" segs={notes8} /></Lane>
    <Lane $h={48}><Clip skin="grey" segs={folderSegs} /></Lane>
    <Lane $h={48}><Clip skin="green" segs={melody} /></Lane>
    <Lane $h={92}>
      <Clip skin="grey" tall segs={[[-20, END, 63, 10]]} title={<ClipTitle>Kontakt 8 02</ClipTitle>} />
    </Lane>
    <Lane $h={48}>
      <Clip skin="grey" to={1733} segs={[[-20, 422, 16], [422, 860, 20], [860, 1728, 18]]} />
      <Clip skin="grey" from={1731} segs={[[1736, 2168, 20], [2168, END, 16]]} />
    </Lane>
    <Lane $h={48}>
      <Clip skin="grey" to={1733} segs={[[-20, 422, 16], [422, 860, 14], [860, 1728, 18]]} />
      <Clip skin="grey" from={1731} segs={[[1736, 2168, 16], [2168, END, 14]]} />
    </Lane>
    <Lane $h={48}>
      <Clip skin="grey" to={1733} segs={[[-20, 1728, 21, 6]]} />
      <Clip skin="grey" from={1731} segs={[[1736, END, 21, 6]]} />
    </Lane>
    <Lane $h={48}>
      <Clip skin="lime" to={1515} segs={limeSegs(-20, 1515)} />
      <Clip skin="lime" from={1513} segs={limeSegs(1513, END)} />
    </Lane>
    <Lane $h={48}>
      <Clip skin="lime" to={1515}><Wave /></Clip>
      <Clip skin="lime" from={1513}><Wave /></Clip>
    </Lane>
    <Lane $h={48}>
      {kicks.map(([x, w]) => (
        <Clip key={x} skin="lime" from={x} to={x + w} plain>
          <path d={`M${x + 7} 5h-2v14h2zM${x + 7} 23h-2v14h2z`} fill="#8c9e12" stroke="#4f5a0c" strokeWidth="1.5" />
        </Clip>
      ))}
    </Lane>
    <Lane $h={48}>
      {snares.map(([x, w]) => (
        <Clip key={x} skin="lime" from={x} to={x + w} plain />
      ))}
    </Lane>
    <Lane $h={48} />
    <Lane $h={48}>
      <Clip skin="grey" from={1654} to={1748}><Swell /></Clip>
    </Lane>
  </Arrange>
);

const HBar = styled.div`
  display: flex;
  gap: 6px;
  height: 24px;
`;

const Well = styled.div<{ $bg?: string; $w?: number }>`
  display: flex;
  align-items: center;
  flex: ${(p) => (p.$w ? `0 0 ${p.$w}px` : "1")};
  min-width: 0;
  justify-content: ${(p) => (p.$w ? "center" : "space-between")};
  padding: 0 ${(p) => (p.$w === 24 ? 4 : 6)}px;
  gap: 8px;
  border-radius: 5px;
  background: ${(p) => p.$bg ?? c.btn};
  color: #f2f2f3;
`;

const HThumb = styled.div`
  width: 88px;
  height: 16px;
  margin: 0 auto 0 16px;
  border-radius: 5px;
  background: #f2f2f3;
`;

const Tiny = styled.button<{ $h?: number }>`
  display: flex;
  align-items: center;
  justify-content: center;
  flex: none;
  width: 16px;
  height: ${(p) => p.$h ?? 16}px;
`;

const HSlider = styled.input`
  flex: 1;
  min-width: 0;
  height: 16px;
  appearance: none;
  background: linear-gradient(#77787a, #77787a) center / 100% 4px no-repeat;
  &::-webkit-slider-thumb {
    appearance: none;
    width: 16px;
    height: 16px;
    border-radius: 50%;
    background: #fff;
  }
`;

const VColumn = styled.div`
  display: flex;
  flex-direction: column;
  gap: 6px;
  flex: none;
  width: 24px;
  margin-bottom: 24px;
`;

const VBox = styled.div<{ $h?: number; $bg?: string; $edge?: boolean; $pad?: number }>`
  display: flex;
  flex-direction: column;
  align-items: center;
  justify-content: space-between;
  flex: ${(p) => (p.$h ? `0 0 ${p.$h}px` : "1")};
  padding: ${(p) => p.$pad ?? 0}px 0;
  border-radius: 5px;
  background: ${(p) => p.$bg ?? "#424548"};
  color: #f2f2f3;
  ${(p) => p.$edge && css`border: 2px solid ${c.edge}; background: ${c.btn};`}
`;

const VThumb = styled.div`
  width: 16px;
  height: 846px;
  margin: 12px 0 auto;
  border-radius: 5px;
  background: #f2f2f3;
`;

const VSlider = styled.input`
  flex: 1;
  min-height: 0;
  width: 16px;
  writing-mode: vertical-lr;
  appearance: none;
  background: linear-gradient(#77787a, #77787a) center / 4px 100% no-repeat;
  &::-webkit-slider-thumb {
    appearance: none;
    width: 16px;
    height: 16px;
    border-radius: 50%;
    background: #fff;
  }
`;

const VControls = () => (
  <VColumn>
    <VBox $h={44} $edge $pad={10}>
      <Tiny $h={20} aria-label="Ruler format"><Icon name="down" size={20} h={18} /></Tiny>
    </VBox>
    <VBox $h={24} $pad={4}><Tiny aria-label="Edit ruler"><Icon name="pencilSmall" size={16} /></Tiny></VBox>
    <VBox $h={96} $pad={4}><VSlider type="range" aria-label="Divider zoom" defaultValue={100} /></VBox>
    <VBox $bg={c.btn} $pad={8}>
      <Tiny aria-label="Scroll up"><Icon name="chevU" size={16} /></Tiny>
      <VThumb />
      <Tiny aria-label="Scroll down"><Icon name="chevD" size={16} /></Tiny>
    </VBox>
    <VBox $h={24} $pad={4}><Tiny aria-label="Vertical zoom presets"><Icon name="down" size={16} /></Tiny></VBox>
    <VBox $h={168} $pad={6}>
      <Tiny aria-label="Zoom out tracks"><Icon name="minus" size={18} /></Tiny>
      <VSlider type="range" aria-label="Track zoom" defaultValue={9} />
      <Tiny aria-label="Zoom in tracks"><Icon name="plus" size={18} /></Tiny>
    </VBox>
  </VColumn>
);

/* ------------------------------------------------------------------ */
/* Meter zone                                                          */
/* ------------------------------------------------------------------ */

const Zone = styled.aside`
  display: flex;
  flex-direction: column;
  flex: none;
  width: 468px;
  padding-left: 8px;
`;

const Tabs = styled.div<{ $bottom?: boolean }>`
  display: flex;
  z-index: 1;
  margin: ${(p) => (p.$bottom ? "-4px 0 0" : "0 0 -4px")};
  height: ${(p) => (p.$bottom ? 45 : 48)}px;
`;

const Tab = styled.button<{ $w: number; $on?: boolean; $bottom?: boolean }>`
  width: ${(p) => p.$w}px;
  padding-top: ${(p) => (p.$bottom ? 12 : 0)}px;
  font-size: 24px;
  font-weight: bold;
  ${(p) =>
    p.$on &&
    css`
      color: #fff;
      background: ${c.chrome};
      border: 4px solid #5f6064;
      ${p.$bottom
        ? css`border-top: 0; border-radius: 0 0 4px 4px;`
        : css`border-bottom: 0; border-radius: 4px 14px 0 0; padding-bottom: 4px;`}
    `}
`;

const Panel = styled.div`
  display: flex;
  flex-direction: column;
  flex: 1;
  padding: 22px 18px 21px;
  border: 4px solid #5f6064;
  border-radius: 14px 0 14px 14px;
  background: ${c.chrome};
`;

const Controls = styled.div`
  display: flex;
  gap: 6px;
`;

const Caption = styled.div`
  display: flex;
  align-items: center;
  justify-content: center;
  flex: 1;
  font-size: 26px;
`;

const MeterRow = styled.div`
  display: grid;
  grid-template-columns: 1fr 162px 1fr;
  height: 390px;
  margin: 26px 0 24px;
`;

const Scale = styled.ol<{ $right?: boolean }>`
  margin: 0;
  padding: ${(p) => (p.$right ? "0 0 0 7px" : "0 7px 0 0")};
  list-style: none;
  font-size: 24px;
  font-weight: bold;
  color: #b9babb;
  li {
    display: flex;
    flex-direction: ${(p) => (p.$right ? "row-reverse" : "row")};
    align-items: center;
    justify-content: flex-end;
    gap: ${(p) => (p.$right ? 2 : 6)}px;
    height: 39px;
  }
  li::after {
    content: "";
    width: 23px;
    height: 2px;
    background: #fff;
  }
`;

const MeterBox = styled.div`
  display: flex;
  justify-content: space-between;
  gap: 2px;
  padding: 4px 2px;
  border: 2px solid #77787a;
  background: linear-gradient(#3a3b3d, #3a3b3d) center / 142px 374px no-repeat, ${c.chrome};
`;

const Channel = styled.div<{ $w?: number; $end?: boolean }>`
  display: flex;
  flex: ${(p) => (p.$w ? `0 0 ${p.$w}px` : "1")};
  align-items: ${(p) => (p.$end ? "flex-end" : "flex-start")};
  padding-top: ${(p) => (p.$end ? 0 : 9)}px;
  background: #000;
`;

const Card = styled.dl`
  flex: 1;
  margin: 0;
  border: 2px solid #17181a;
  border-radius: 10px;
  background: #1b1c20;
`;

const Stat = styled.div`
  height: 128px;
  margin: 0 6px;
  border-bottom: 2px solid #55565a;
  &:last-child {
    height: 126px;
    border: 0;
  }
`;

const StatName = styled.dt`
  line-height: 58px;
  text-align: center;
`;

const StatLine = styled.dd<{ $hot?: boolean }>`
  display: grid;
  grid-template-columns: 1fr 156px 1fr;
  align-items: center;
  height: 58px;
  margin: 0;
  strong {
    font-size: 32px;
    font-weight: normal;
    text-align: center;
    color: ${(p) => (p.$hot ? "#e24f38" : "inherit")};
  }
  span { padding-top: 10px; }
  span:first-child { padding-right: 3px; text-align: right; }
`;

const stats: [string, string, string, string?, boolean?][] = [
  ["Momentary Max.", "-8.6", "LUFS"],
  ["Short-Term", "--", "LUFS", "-10.1"],
  ["Integrated", "-14.4", "LUFS", "", true],
  ["Range", "+14.6", "LU"],
  ["True Peak", "+0.88", "dB", "", true],
  ["Time", "02:56:29", ""],
];

const scale = [14, 17, 20, 23, 26, 29, 32, 35, 38];

const MeterZone = () => (
  <Zone>
    <Tabs role="tablist">
      <Tab $w={104} role="tab">VSTi</Tab>
      <Tab $w={136} role="tab">Media</Tab>
      <Tab $w={94} role="tab">CR</Tab>
      <Tab $w={126} $on role="tab" aria-selected="true">Meter</Tab>
    </Tabs>
    <Panel>
      <Controls>
        <Group $w={254}>
          <Btn $tone="lit" aria-label="Measure loudness"><Icon name="power" size={30} /></Btn>
          <Caption>LUFS</Caption>
        </Group>
        <Group $w={100}>
          <Btn aria-label="Loudness settings"><Icon name="gear" size={30} /></Btn>
          <Btn aria-label="Reset"><Icon name="rewind" size={28} h={24} /></Btn>
        </Group>
        <Group $w={50}>
          <Btn aria-label="Monitor source"><Icon name="monitor" size={40} h={28} /></Btn>
        </Group>
      </Controls>
      <MeterRow>
        <Scale>{scale.map((n) => <li key={n}>{n}</li>)}</Scale>
        <MeterBox>
          <Channel $w={26}>
            <Svg viewBox="0 0 22 20" $w={22} $h={20} aria-hidden="true"><path d="M0 10L22 0v20z" fill="#d40000" /></Svg>
          </Channel>
          <Channel />
          <Channel $w={24} $end>
            <Svg viewBox="0 0 24 9" $w={24} $h={9} aria-hidden="true"><path d="M3 0l20 9H3z" fill="#77787a" /></Svg>
          </Channel>
        </MeterBox>
        <Scale $right>{scale.map((n) => <li key={n}>{n}</li>)}</Scale>
      </MeterRow>
      <Card>
        {stats.map(([name, value, unit, held, hot]) => (
          <Stat key={name}>
            <StatName>{name}</StatName>
            <StatLine $hot={hot}>
              <span>{held}</span>
              <strong>{value}</strong>
              <span>{unit}</span>
            </StatLine>
          </Stat>
        ))}
      </Card>
    </Panel>
    <Tabs $bottom role="tablist">
      <Tab $w={158} $bottom role="tab">Master</Tab>
      <Tab $w={196} $on $bottom role="tab" aria-selected="true">Loudness</Tab>
    </Tabs>
  </Zone>
);

/* ------------------------------------------------------------------ */
/* Transport                                                           */
/* ------------------------------------------------------------------ */

const Bar = styled.footer`
  display: flex;
  align-items: center;
  height: 80px;
  overflow: hidden;
  border-bottom: 2px solid #3b3d40;
  border-radius: 0 0 16px 0;
  background: ${c.chrome};
`;

const Gap = styled.div<{ $w: number }>`
  flex: none;
  width: ${(p) => p.$w}px;
`;

const Handle = styled.div`
  flex: none;
  width: 6px;
  height: 20px;
  margin: 0 13px 0 3px;
  background: repeating-linear-gradient(#d0d1d2 0 4px, transparent 4px 8px);
`;

const Field = styled.input<{ $w: number; $small?: boolean }>`
  flex: none;
  width: ${(p) => p.$w}px;
  padding: 0 ${(p) => (p.$small ? 6 : 14)}px;
  background: ${c.well};
  box-shadow: inset 0 2px ${c.edge}, inset 0 -2px ${c.edge};
  font-size: ${(p) => (p.$small ? 26 : 31)}px;
  text-align: right;
`;

const Deck = styled.div`
  display: flex;
  flex: none;
  width: 400px;
  height: 64px;
  border: 4px solid #b3b3b4;
  border-radius: 6px;
  background: #5c5d5f;
  overflow: hidden;
`;

const DeckBtn = styled(Btn)<{ $active?: boolean }>`
  flex: ${(p) => (p.$active ? "0 0 100px" : "1")};
  ${(p) => p.$active && css`background: #a3a9ae; color: #232425;`}
`;

const AQ = styled(Btn)`
  font-weight: normal;
  font-size: 26px;
`;

const Spin = styled.div`
  display: flex;
  flex-direction: column;
  align-items: center;
  justify-content: center;
  gap: 6px;
  flex: none;
  width: 44px;
  background: ${c.well};
  box-shadow: inset 0 2px ${c.edge}, inset 0 -2px ${c.edge};
`;

const SpinBtn = styled.button<{ $up?: boolean }>`
  width: 16px;
  height: 12px;
  background: ${c.ink};
  clip-path: ${(p) => (p.$up ? "polygon(50% 0, 100% 100%, 0 100%)" : "polygon(0 0, 100% 0, 50% 100%)")};
`;

const Pattern = styled.div`
  display: flex;
  align-items: flex-end;
  justify-content: space-between;
  flex: none;
  width: 148px;
  padding: 8px 22px 8px 8px;
  background: ${c.well};
  box-shadow: inset 0 0 0 2px ${c.edge};
`;

const Beat = styled.i<{ $up?: boolean }>`
  width: 16px;
  height: 6px;
  align-self: ${(p) => (p.$up ? "flex-start" : "flex-end")};
  background: #f2f2f3;
`;

const Level = styled.div`
  display: flex;
  flex: none;
  justify-content: space-between;
  width: 178px;
  height: 50px;
  padding: 2px 6px 2px 50px;
  border: 2px solid ${c.edge};
  border-radius: 7px;
  background: ${c.well};
`;

const Mark = styled.i<{ $w: number; $bg: string }>`
  width: ${(p) => p.$w}px;
  background: ${(p) => p.$bg};
`;

const MenuBtn = ({ icon, label }: { icon: string; label: string }) => (
  <Group $w={88}>
    <Btn $w={88} $tone="well" aria-label={label}>
      <Icon name={icon} size={icon === "record" ? 24 : 30} />
      <Svg viewBox="0 0 32 20" $w={32} $h={20} aria-hidden="true"><path d="M14 3h16l-8 16z" /></Svg>
    </Btn>
  </Group>
);

const Transport = () => (
  <Bar>
    <Partial $bg={c.btn} aria-label="Constrain delay" />
    <Gap $w={10} />
    <MenuBtn icon="record" label="Common record modes" />
    <Handle />
    <MenuBtn icon="wave" label="Audio record modes" />
    <Handle />
    <MenuBtn icon="midi" label="MIDI record modes" />
    <Handle />
    <Group $w={76}><AQ $w={76}>AQ</AQ></Group>
    <Gap $w={26} />
    <Group $w={300}>
      <Btn $notch aria-label="Go to left locator"><Icon name="locL" size={28} /></Btn>
      <Field $w={250} aria-label="Left locator" defaultValue="0:00:03.000" />
    </Group>
    <Gap $w={20} />
    <Group $w={300}>
      <Btn $notch aria-label="Go to right locator"><Icon name="locR" size={28} /></Btn>
      <Field $w={250} aria-label="Right locator" defaultValue="0:00:51.000" />
    </Group>
    <Gap $w={10} />
    <Group $w={150}>
      <Btn $tone="lit" aria-label="Lock punch points"><Icon name="lock" size={28} /></Btn>
      <Btn $notch aria-label="Punch in"><Icon name="punchIn" size={26} /></Btn>
      <Btn $notch aria-label="Punch out"><Icon name="punchOut" size={26} /></Btn>
    </Group>
    <Handle />
    <Deck>
      <DeckBtn aria-label="Cycle"><Icon name="cycle" size={34} /></DeckBtn>
      <DeckBtn $active aria-label="Stop"><Icon name="stop" size={34} /></DeckBtn>
      <DeckBtn aria-label="Play"><Icon name="play" size={34} /></DeckBtn>
      <DeckBtn aria-label="Record"><Icon name="rec" size={34} /></DeckBtn>
    </Deck>
    <Handle />
    <Group $w={76}><Btn $w={76} $tone="dim" aria-label="Pre-roll"><Icon name="moon" size={30} h={26} /></Btn></Group>
    <Gap $w={10} />
    <Group $w={300}>
      <Btn $tone="well" aria-label="Time format"><Icon name="clock" size={26} /></Btn>
      <Field $w={250} aria-label="Project position" defaultValue="0:00:00.000" />
    </Group>
    <Handle />
    <Group $w={364}>
      <Btn $tone="lit" aria-label="Tempo track"><Icon name="note" size={28} /></Btn>
      <Field $w={118} $small aria-label="Tempo" defaultValue="80.000" />
      <Spin>
        <SpinBtn $up aria-label="Raise tempo" />
        <SpinBtn aria-label="Lower tempo" />
      </Spin>
      <AQ $w={102}>Tap</AQ>
      <Btn $tone="well" aria-label="Tempo options"><Icon name="down" size={24} h={20} /></Btn>
    </Group>
    <Handle />
    <Group $w={286}>
      <Btn $tone="lit" aria-label="Metronome"><Icon name="metronome" size={30} /></Btn>
      <Btn aria-label="Count-in"><Icon name="click" size={24} h={18} /></Btn>
      <Pattern>
        <Beat $up />
        <Beat />
        <Beat />
        <Beat />
      </Pattern>
      <Btn $w={38} aria-label="Metronome setup"><Icon name="gear" size={22} /></Btn>
    </Group>
    <Handle />
    <Level>
      <Mark $w={2} $bg="#4b4c4f" />
      <Mark $w={8} $bg="#ec3323" />
    </Level>
    <Handle />
  </Bar>
);

/* The window behind shows a darkened sliver of its own transport bar. */
const Behind = styled.div`
  height: 12px;
  overflow: hidden;
  background: #0f1011;
  > div {
    margin-top: -48px;
    opacity: 0.6;
  }
`;

export default function App() {
  return (
    <Page>
      <Global />
      <TitleBar>
        <Light $bg="#f5be4f" aria-label="Minimise" />
        <Light $bg="#62c654" aria-label="Full screen" />
        <Title>
          <Svg viewBox="0 0 24 30" $w={24} $h={30} aria-hidden="true">
            <path d="M1 1h15l7 7v21H1z" fill="#fafafa" />
            <path d="M16 1l7 7h-7z" fill="#d5d6d7" />
            <path d="M12 8l-6 7 6 7" fill="none" stroke="#1c4f82" strokeWidth="3" />
            <circle cx="15" cy="15" r="2.6" fill="#1c4f82" />
          </Svg>
          <span>Cubase Pro Project - Resonators水晶洞</span>
        </Title>
      </TitleBar>
      <MainToolbar />
      <StatusBar>
        {status.map(([k, v, warn]) => (
          <Pill key={k} $warn={warn}>
            <dt>{k}</dt>
            <dd>{v}</dd>
          </Pill>
        ))}
      </StatusBar>
      <InfoLine>No Object Selected</InfoLine>
      <Main>
        <Frame>
          <TrackList />
          <Divider><Grip /></Divider>
          <Timeline>
            <Ruler h={50} bg="#8b8b8f" tick={17} short />
            <Ruler h={38} bg="#b0c1ca" tick={13} />
            <Arrangement />
            <HBar>
              <Well>
                <Tiny aria-label="Scroll left"><Icon name="chevL" size={16} /></Tiny>
                <HThumb />
                <Tiny aria-label="Scroll right"><Icon name="chevR" size={16} /></Tiny>
              </Well>
              <Well $w={24} $bg="#424548">
                <Tiny aria-label="Zoom presets"><Icon name="down" size={16} /></Tiny>
              </Well>
              <Well $w={168} $bg="#424548">
                <Tiny aria-label="Zoom out"><Icon name="minus" size={18} /></Tiny>
                <HSlider type="range" aria-label="Horizontal zoom" defaultValue={43} />
                <Tiny aria-label="Zoom in"><Icon name="plus" size={18} /></Tiny>
              </Well>
            </HBar>
          </Timeline>
          <VControls />
        </Frame>
        <MeterZone />
      </Main>
      <Transport />
      <Behind aria-hidden="true" inert>
        <div><Transport /></div>
      </Behind>
    </Page>
  );
}
